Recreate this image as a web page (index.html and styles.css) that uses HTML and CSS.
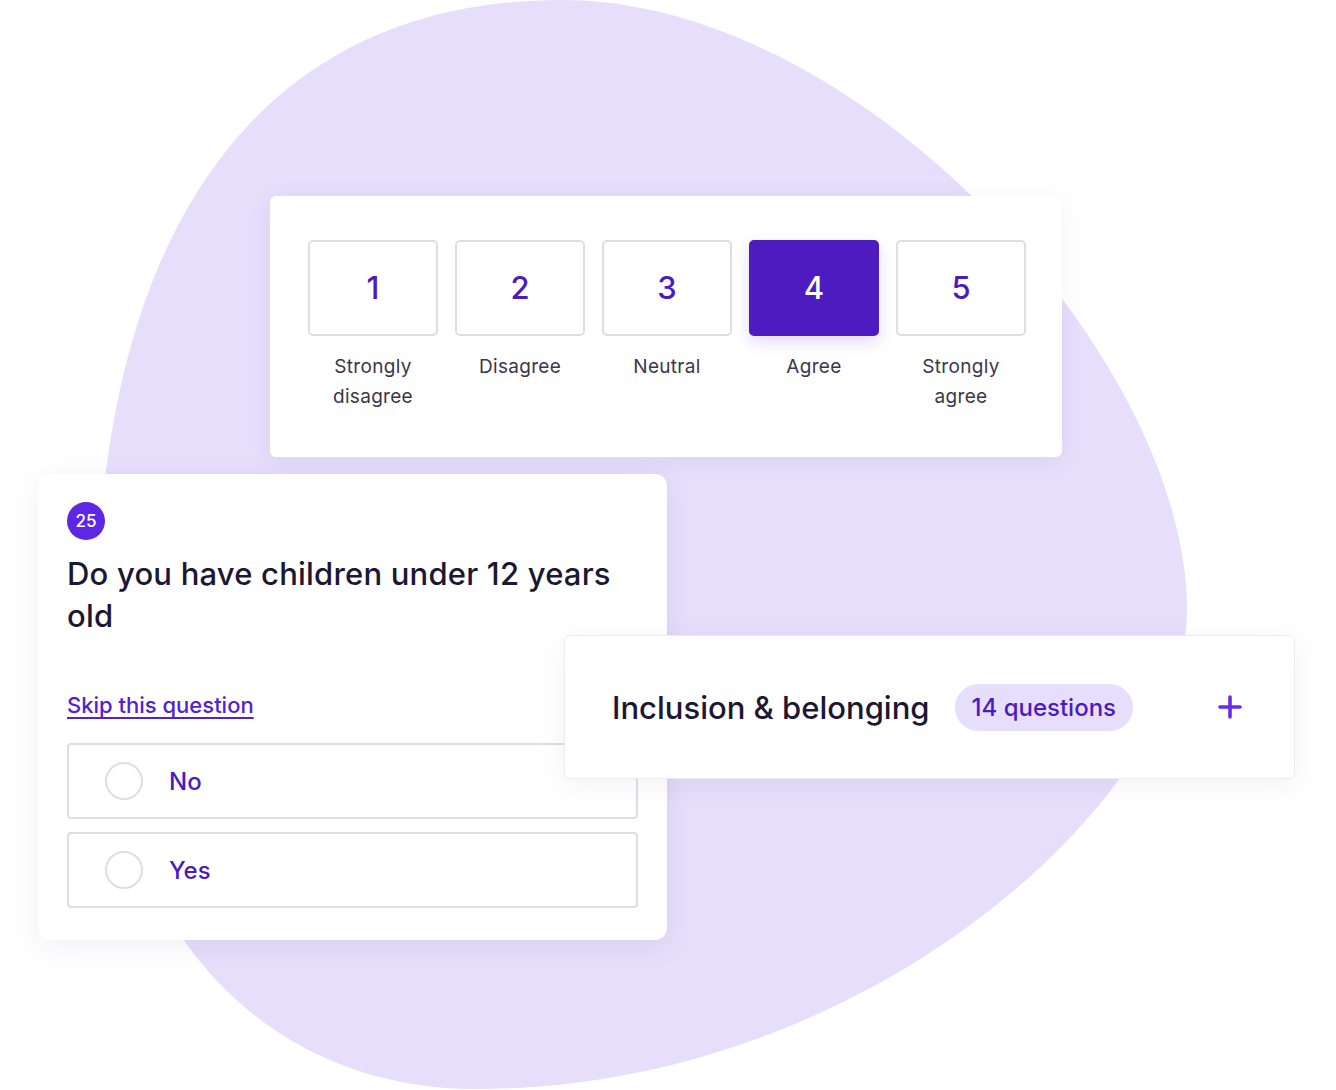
FILE: index.html
```html
<!DOCTYPE html>
<html lang="en">
<head>
<meta charset="utf-8">
<title>Survey</title>
<link rel="stylesheet" href="styles.css">
</head>
<body>
<main class="canvas">
  <svg class="blob" width="1336" height="1090" viewBox="0 0 1336 1090" aria-hidden="true">
    <path fill="#e6defb" d="M562,0 C862,0 1187,360 1187,610 C1187,790 875,1089 475,1089 C275,1089 97,940 97,620 C97,270 232,0 562,0 Z"/>
  </svg>

  <section class="card scale-card">
    <div class="scale">
      <div class="scale-item">
        <div class="scale-box">1</div>
        <div class="scale-label">Strongly<br>disagree</div>
      </div>
      <div class="scale-item">
        <div class="scale-box">2</div>
        <div class="scale-label">Disagree</div>
      </div>
      <div class="scale-item">
        <div class="scale-box">3</div>
        <div class="scale-label">Neutral</div>
      </div>
      <div class="scale-item">
        <div class="scale-box is-selected">4</div>
        <div class="scale-label">Agree</div>
      </div>
      <div class="scale-item">
        <div class="scale-box">5</div>
        <div class="scale-label">Strongly<br>agree</div>
      </div>
    </div>
  </section>

  <section class="card question-card">
    <div class="q-badge">25</div>
    <h2 class="q-title">Do you have children under 12 years old</h2>
    <a class="q-skip" href="#">Skip this question</a>
    <div class="q-options">
      <label class="q-option"><span class="q-radio"></span><span class="q-text">No</span></label>
      <label class="q-option"><span class="q-radio"></span><span class="q-text">Yes</span></label>
    </div>
  </section>

  <section class="card topic-card">
    <span class="topic-title">Inclusion &amp; belonging</span>
    <span class="topic-pill">14 questions</span>
    <svg class="topic-plus" width="24" height="24" viewBox="0 0 24 24" aria-hidden="true">
      <path d="M12 2v20M2 12h20" stroke="#672ce8" stroke-width="3.6" stroke-linecap="round" fill="none"/>
    </svg>
  </section>
</main>
</body>
</html>
```

FILE: styles.css
```css
* { box-sizing: border-box; }

html, body {
  margin: 0;
  padding: 0;
  background: #ffffff;
}

body {
  font-family: Inter, "Noto Sans", "Liberation Sans", sans-serif;
  color: #1c1733;
}

.canvas {
  position: relative;
  width: 1336px;
  height: 1090px;
  overflow: hidden;
}

.blob {
  position: absolute;
  left: 0;
  top: 0;
}

.card {
  position: absolute;
  background: #ffffff;
}

/* ---------- scale card ---------- */
.scale-card {
  left: 270px;
  top: 196px;
  width: 792px;
  height: 261px;
  border-radius: 6px;
  padding: 44px 37px 0 38px;
  box-shadow: 0 4px 24px rgba(60, 40, 120, 0.06);
}

.scale {
  display: flex;
  gap: 17px;
}

.scale-item {
  width: 130px;
  display: flex;
  flex-direction: column;
  align-items: center;
}

.scale-box {
  width: 130px;
  height: 96px;
  border: 2px solid #dedde2;
  border-radius: 5px;
  display: flex;
  align-items: center;
  justify-content: center;
  padding-bottom: 2px;
  font-size: 31px;
  font-weight: 500;
  color: #4c1bbf;
  background: #fff;
}

.scale-box.is-selected {
  background: #4d1bbf;
  border-color: #4d1bbf;
  color: #ffffff;
  box-shadow: 0 6px 16px rgba(77, 27, 191, 0.16);
}

.scale-label {
  margin-top: 16px;
  font-size: 19px;
  line-height: 30px;
  color: #3b3649;
  text-align: center;
  letter-spacing: 0.3px;
}

/* ---------- question card ---------- */
.question-card {
  left: 38px;
  top: 474px;
  width: 629px;
  height: 466px;
  border-radius: 12px;
  padding: 28px 29px 0 29px;
  box-shadow: 0 6px 30px rgba(40, 30, 80, 0.07);
}

.q-badge {
  width: 38px;
  height: 38px;
  border-radius: 50%;
  background: #5e27e4;
  color: #ffffff;
  font-size: 17px;
  font-weight: 500;
  display: flex;
  align-items: center;
  justify-content: center;
}

.q-title {
  margin: 13px 0 0 0;
  font-size: 31px;
  line-height: 42px;
  font-weight: 500;
  color: #1c1733;
  letter-spacing: 0.2px;
  width: 571px;
}

.q-skip {
  display: inline-block;
  margin-top: 54px;
  font-size: 22px;
  line-height: 28px;
  font-weight: 500;
  color: #5421d0;
  text-decoration: underline;
  text-decoration-thickness: 2px;
  text-underline-offset: 4px;
}

.q-options {
  margin-top: 24px;
  display: flex;
  flex-direction: column;
  gap: 13px;
  width: 571px;
}

.q-option {
  height: 76px;
  border: 2px solid #dedde2;
  border-radius: 4px;
  display: flex;
  align-items: center;
  padding-left: 36px;
  gap: 26px;
  background: #fff;
}

.q-radio {
  width: 38px;
  height: 38px;
  border: 2px solid #dedde2;
  border-radius: 50%;
}

.q-text {
  font-size: 24px;
  font-weight: 500;
  color: #4c1bbf;
}

/* ---------- topic card ---------- */
.topic-card {
  left: 564px;
  top: 635px;
  width: 731px;
  height: 144px;
  border-radius: 6px;
  border: 1px solid #ecebef;
  box-shadow: 0 6px 30px rgba(40, 30, 80, 0.06);
  display: flex;
  align-items: center;
  padding-left: 47px;
}

.topic-title {
  font-size: 31px;
  font-weight: 500;
  color: #1c1733;
}

.topic-pill {
  margin-left: 25px;
  height: 47px;
  padding: 0 17px;
  border-radius: 24px;
  background: #e6defb;
  color: #4c1bbf;
  font-size: 24px;
  font-weight: 500;
  display: flex;
  align-items: center;
}

.topic-plus {
  margin-left: auto;
  margin-right: 52px;
}
```
